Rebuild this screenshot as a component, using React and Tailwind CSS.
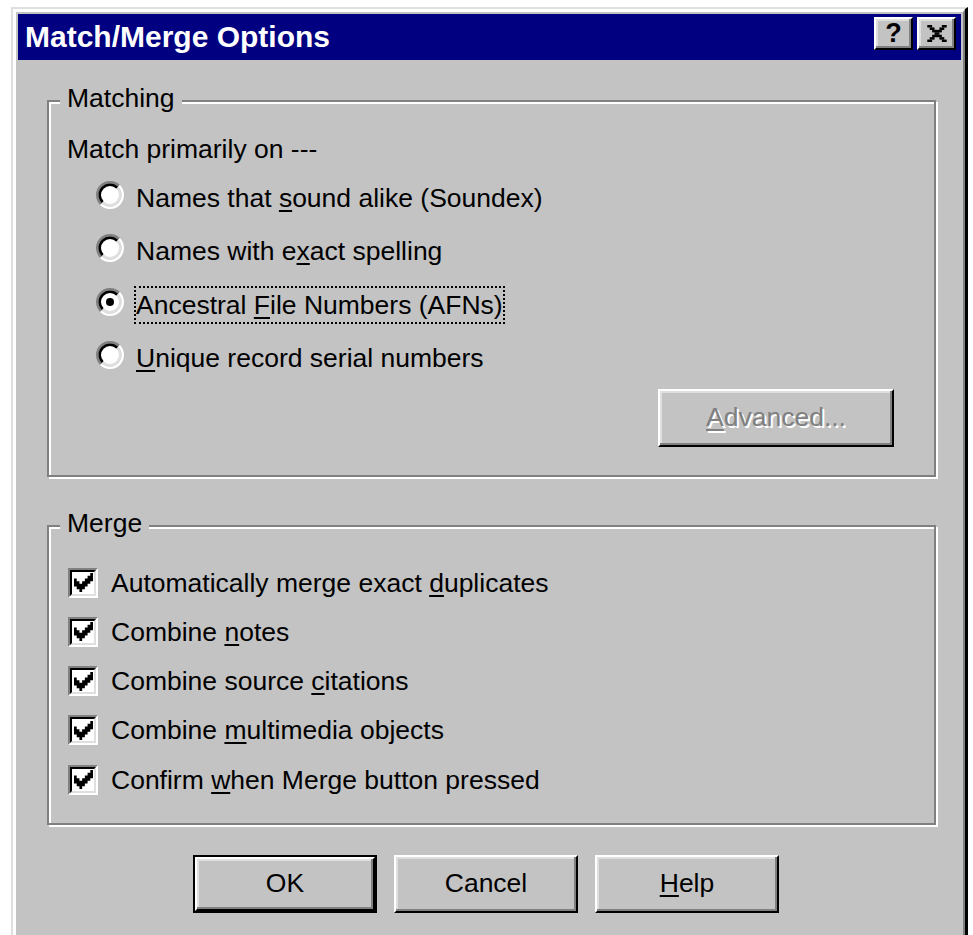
import React from "react";

// Win98-style Match/Merge Options dialog

function Radio({ checked }) {
  return (
    <svg width="28" height="28" viewBox="0 0 28 28" className="shrink-0 mb-[6px]">
      <circle cx="14" cy="14" r="10" fill="#ffffff" />
      <path d="M4.98 23.02A12.75 12.75 0 0 1 23.02 4.98" fill="none" stroke="#808080" strokeWidth="2.5" />
      <path d="M23.02 4.98A12.75 12.75 0 0 1 4.98 23.02" fill="none" stroke="#ffffff" strokeWidth="2.5" />
      <path d="M6.75 21.25A10.25 10.25 0 0 1 21.25 6.75" fill="none" stroke="#000000" strokeWidth="2.5" />
      <path d="M21.25 6.75A10.25 10.25 0 0 1 6.75 21.25" fill="none" stroke="#dfdfdf" strokeWidth="2.5" />
      {checked && <circle cx="14" cy="14" r="4" fill="#000000" />}
    </svg>
  );
}

function Checkbox() {
  return (
    <div className="w-[30px] h-[30px] shrink-0 border-2 border-t-[#808080] border-l-[#808080] border-r-white border-b-white">
      <div className="w-full h-full border-2 border-t-black border-l-black border-r-[#dfdfdf] border-b-[#dfdfdf] bg-white flex items-center justify-center">
        <svg width="19" height="19" viewBox="0 0 7 7">
          <path d="M6 0H7V3H6V4H5V5H4V6H3V7H2V6H1V5H0V2H1V3H2V4H3V3H4V2H5V1H6Z" fill="#000000" />
        </svg>
      </div>
    </div>
  );
}

function Key({ children }) {
  return <u className="underline decoration-[2px] underline-offset-[3px]">{children}</u>;
}

function CloseGlyph() {
  const rows = [
    [[0, 2], [6, 2]],
    [[1, 2], [5, 2]],
    [[2, 4]],
    [[3, 2]],
    [[2, 4]],
    [[1, 2], [5, 2]],
    [[0, 2], [6, 2]],
  ];
  return (
    <svg width="20" height="17" viewBox="0 0 8 7">
      {rows.map((runs, y) =>
        runs.map(([x, w]) => <rect key={y + "-" + x} x={x} y={y} width={w} height={1.05} fill="#000000" />)
      )}
    </svg>
  );
}

const raised =
  "border-2 border-t-white border-l-white border-r-black border-b-black shadow-[inset_-2px_-2px_0_#808080,inset_2px_2px_0_#dfdfdf] bg-[#c3c3c3]";

const etched =
  "relative border-2 border-[#808080] shadow-[inset_2px_2px_0_#ffffff,2px_2px_0_#ffffff]";

const matchOptions = [
  { label: <>Names that <Key>s</Key>ound alike (Soundex)</> },
  { label: <>Names with e<Key>x</Key>act spelling</> },
  { label: <>Ancestral <Key>F</Key>ile Numbers (AFNs)</>, checked: true },
  { label: <><Key>U</Key>nique record serial numbers</> },
];

const mergeOptions = [
  <>Automatically merge exact <Key>d</Key>uplicates</>,
  <>Combine <Key>n</Key>otes</>,
  <>Combine source <Key>c</Key>itations</>,
  <>Combine <Key>m</Key>ultimedia objects</>,
  <>Confirm <Key>w</Key>hen Merge button pressed</>,
];

export default function App() {
  return (
    <div className="w-[973px] h-[935px] overflow-hidden bg-white pt-[7px] pl-[11px] font-['Liberation_Sans',Arial,sans-serif] text-black">
      <div className="w-[957px] h-[940px] border-t-2 border-l-2 border-t-[#dfdfdf] border-l-[#dfdfdf] border-r-[3px] border-b-[3px] border-r-black border-b-black">
        <div className="h-full border-t-[3px] border-l-[3px] border-t-white border-l-white border-r-2 border-b-2 border-r-[#808080] border-b-[#808080] bg-[#c3c3c3] p-[2px]">
          {/* title bar */}
          <div className="h-[46px] bg-[#000080] flex items-start pl-[7px] pr-[5px]">
            <span className="self-center text-white font-bold text-[30px] leading-none">Match/Merge Options</span>
            <div className="ml-auto mt-[3px] flex gap-[4px]">
              <div className={"w-[39px] h-[33px] flex items-center justify-center " + raised}>
                <span className="font-bold text-[27px] leading-none">?</span>
              </div>
              <div className={"w-[39px] h-[33px] flex items-center justify-center " + raised}>
                <CloseGlyph />
              </div>
            </div>
          </div>

          {/* client area */}
          <div className="pt-[40px] pl-[29px] pr-[25px] text-[26.5px]">
            <div className={etched + " h-[377px] flex flex-col"}>
              <span className="absolute left-[11px] top-[-19px] px-[7px] leading-[30px] bg-[#c3c3c3]">Matching</span>
              <div className="mt-[31px] ml-[18px] leading-[32px]">Match primarily on ---</div>
              <div className="mt-[6px] ml-[47px] flex flex-col">
                {matchOptions.map((opt, i) => (
                  <div key={i} className="h-[53.5px] flex items-center gap-[10px]">
                    <Radio checked={opt.checked} />
                    <span
                      className={
                        opt.checked
                          ? "border-2 border-dotted border-black leading-[34px] whitespace-nowrap"
                          : "border-2 border-transparent leading-[34px] whitespace-nowrap"
                      }
                    >
                      {opt.label}
                    </span>
                  </div>
                ))}
              </div>
              <div className={"self-end mr-[40px] mt-[4px] w-[236px] h-[58px] flex items-center justify-center " + raised}>
                <span className="text-[#808080] [text-shadow:2px_2px_0_#ffffff]">
                  <Key>A</Key>dvanced...
                </span>
              </div>
            </div>

            <div className={etched + " mt-[48px] h-[300px] flex flex-col"}>
              <span className="absolute left-[11px] top-[-19px] px-[7px] leading-[30px] bg-[#c3c3c3]">Merge</span>
              <div className="mt-[31px] ml-[19px] flex flex-col">
                {mergeOptions.map((label, i) => (
                  <div key={i} className="h-[49.25px] flex items-center gap-[13px]">
                    <Checkbox />
                    <span className="leading-[32px] whitespace-nowrap">{label}</span>
                  </div>
                ))}
              </div>
            </div>

            <div className="mt-[30px] ml-[146px] flex gap-[17px]">
              <div className="w-[184px] h-[58px] border-2 border-black">
                <div className={"w-full h-full flex items-center justify-center " + raised}>OK</div>
              </div>
              <div className={"w-[184px] h-[58px] flex items-center justify-center " + raised}>Cancel</div>
              <div className={"w-[184px] h-[58px] flex items-center justify-center " + raised}>
                <span>
                  <Key>H</Key>elp
                </span>
              </div>
            </div>
          </div>
        </div>
      </div>
    </div>
  );
}
